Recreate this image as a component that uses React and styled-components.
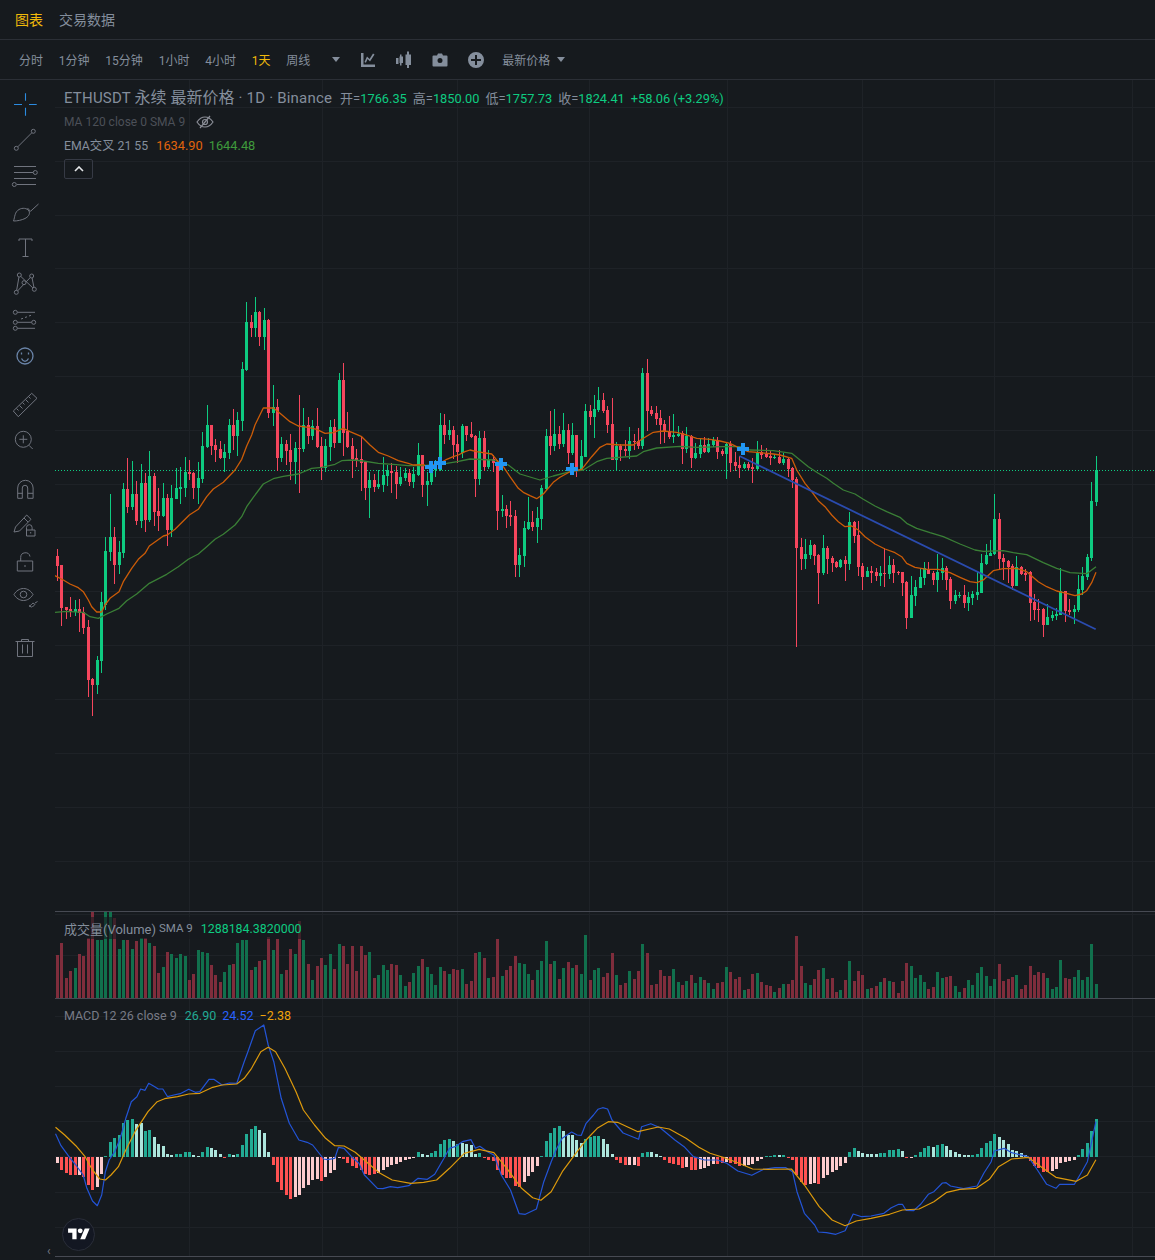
import React from "react";
import styled, { createGlobalStyle } from "styled-components";

const GlobalStyle = createGlobalStyle`
  html, body { margin: 0; padding: 0; background: #161a1e; }
  body { font-family: Roboto, "Noto Sans CJK SC", sans-serif; overflow: hidden; }
  #root { width: 1155px; height: 1260px; overflow: hidden; }
`;

/* ---------- data (read off the chart) ---------- */
const parseCandles = (s, ox, oy) =>
  s.trim().split(/\s*;\s*/).filter(Boolean).map((r) => {
    const p = r.trim().split(/\s+/);
    return { up: p[0] === "g", hi: oy + +p[1] / 3, top: oy + +p[2] / 3, bot: oy + +p[3] / 3, lo: oy + +p[4] / 3 };
  });

const candles = [
  ...parseCandles(`r 777 798 828 873;r 825 825 953 1007;r 950 951 961 987;r 921 957 965 981;g 930 957 965 978;r 927 957 969 1026;r 951 966 1014 1032;r 990 1011 1170 1220;r 1164 1167 1185 1277;g 1098 1110 1185 1212;
  g 906 936 1113 1149;g 741 783 945 960;g 612 741 786 813;r 711 741 825 882;g 753 786 825 852;g 579 597 789 804;r 504 597 651 669;g 513 612 651 660;r 573 612 693 705;g 522 579 693 714;
  r 549 579 690 726;g 483 558 690 696;r 549 558 666 708;r 594 663 678 723;g 579 624 678 681;r 612 624 720 768;g 585 624 720 741;g 534 594 627 627;g 531 591 597 642;g 501 546 594 621;
  r 510 546 552 570;r 546 549 594 627;g 516 564 594 642;g 426 468 567 579;g 345 405 471 474;r 405 405 468 495;r 447 465 480 516;r 453 477 504 507;g 462 486 504 546;g 387 405 489 507;
  r 357 405 438 480;g 366 390 438 498;g 216 237 393 423;g 36 96 240 243;r 75 96 114 141;g 21 66 114 141;r 63 66 141 168;g 54 90 141 180;r 87 90 369 384;g 285 351 369 408;
  r 327 351 504 543;g 441 462 504 516;r 450 462 483 525;r 432 480 516 570;g 456 474 516 582;r 315 474 477 609;g 354 405 477 486;r 381 405 438 462;g 390 408 438 450;r 354 408 471 474;
  r 441 468 534 570;g 447 468 534 546;g 390 411 471 513;r 387 411 459 474;g 249 270 459 459;r 219 270 429 498;r 366 423 471 474;r 444 468 507 564;r 477 504 510 531;r 438 507 519 603;
  r 513 516 594 630;g 546 570 594 684;r 552 570 591 606;g 540 582 591 597;g 501 555 585 606;g 525 541 558 588;r 519 543 549 609;r 528 546 582 627;g 531 561 582 588;g 534 549 564 573;
  r 537 549 576 588;g 531 552 576 594;g 459 495 555 558;r 494 495 585 621`, 50, 290),
  ...parseCandles(`g 365 393 405 468;g 335 355 396 405;g 330 345 360 380;g 189 225 360 362;r 192 225 255 282;g 210 240 255 270;r 228 240 285 327;r 255 282 306 339;g 222 228 309 324;r 228 228 255 273;
  r 216 252 261 264;r 255 258 387 441;g 243 264 387 405;r 243 264 351 363;g 300 327 351 357;r 315 327 339 366;r 330 336 483 540;g 435 477 483 501;r 465 477 498 534;r 453 495 501 528;
  r 480 498 645 681;g 594 615 645 681;g 513 534 618 651;g 441 516 537 540;r 483 516 531 543;g 471 504 531 579;g 405 414 507 540;g 237 258 417 420;r 183 258 288 315;g 177 252 288 303;
  r 228 252 282 297;g 189 240 282 291;r 222 240 309 342;g 219 255 309 315;r 255 255 360 381;g 270 318 360 360;g 162 183 321 321;r 165 183 201 225;g 135 177 201 264;g 111 150 180 186;
  r 129 150 183 189;r 168 180 225 249;r 144 222 330 330;g 276 288 330 362;r 282 288 300 333;r 270 297 303 318;g 231 273 303 327;r 252 273 276 300;r 234 273 288 297;g 54 69 288 297;
  r 27 69 183 243;r 168 180 192 198;r 168 189 207 225;r 180 204 225 282;r 210 222 243 279;r 198 243 261 267;g 192 255 261 279;g 228 252 258 261;r 243 249 297 342;g 231 258 297 309;
  r 255 258 324 354;g 279 309 324 327;g 267 285 312 324;r 261 285 306 309;g 264 282 306 309;g 261 270 285 291;r 261 270 306 327;r 297 303 312 318;g 279 282 312 387;r 273 282 339 366;
  r 306 336 348 363;r 318 345 354 384;g 336 342 354 357;r 336 342 354 360;r 324 351 357 399;g 273 309 357 360;r 285 306 315 327;r 294 312 321 324;r 300 318 324 345;g 315 321 324 327;
  r 300 321 339 342;g 309 327 339 345;r 324 327 357 381;r 351 354 390 414`, 420, 350),
  ...parseCandles(`r 112 117 323 623;r 294 321 357 390;g 297 342 357 387;g 300 315 345 357;r 312 315 348 375;r 342 345 399 492;g 285 324 399 405;r 318 324 357 402;r 348 354 369 396;r 363 366 381 384;
  g 357 360 381 384;r 348 360 372 423;g 216 246 372 390;r 243 246 288 309;r 243 285 381 408;r 369 378 411 450;g 381 393 411 411;r 378 393 399 429;r 384 396 408 423;g 378 399 408 438;
  r 325 399 402 441;g 348 375 402 417;r 357 375 399 429;r 393 396 399 405;r 396 396 429 468;r 423 426 534 567;g 408 465 534 534;g 420 441 468 498;g 384 411 444 444;g 366 384 414 435;
  r 366 387 402 402;r 393 399 420 435;g 342 396 420 456;g 354 384 399 420;r 378 384 420 450;r 411 417 483 507;g 450 465 483 492;g 456 465 468 474;r 435 465 489 504;g 456 471 489 513;
  g 453 462 474 495;g 396 456 465 480;g 342 369 459 459;g 312 345 372 375;g 300 339 348 345;g 162 237 342 345;r 219 237 357 390;r 342 354 366 420;r 360 363 381 429;r 372 378 438 450;
  g 348 381 438 438;r 378 381 402 405;r 387 399 405 423;r 393 396 489 543;r 462 486 510 540;r 477 507 510 546;r 504 507 555 591;g 492 531 555 555;g 513 525 534 543;g 504 522 528 540;
  g 385 453 525 525;r 453 453 513 546;r 477 510 516 525;g 495 507 516 552;g 405 447 510 516;g 381 408 450 465;g 342 351 411 420;g 126 183 354 363;g 48 90 186 198`, 780, 440),
];

const candleX = (i) => Math.floor(57.55 + 4.4005 * i);

const volumeTops = [
  150,114,219,198,189,147,153,100,20,105,105,20,20,40,132,105,105,132,108,100,100,115,123,204,186,141,147,159,147,153,
  225,207,135,141,144,180,210,231,201,180,177,114,105,105,195,186,168,165,96,135,102,207,195,132,147,48,105,177,225,183,
  159,180,147,192,117,123,177,123,198,123,150,141,219,210,180,195,177,180,210,243,231,204,183,162,186,207,240,186,198,207,
  192,195,192,237,228,144,141,159,219,216,102,213,195,183,153,174,178,207,225,195,168,108,177,168,222,189,171,189,180,
  207,90,225,195,189,216,204,144,210,240,234,198,222,198,117,144,240,237,195,213,213,192,231,240,228,210,234,216,225,234,
  252,234,231,186,201,222,216,255,252,207,204,231,240,243,261,249,237,237,225,93,183,234,240,222,195,189,222,219,261,255,
  225,168,228,198,210,252,249,243,231,219,228,231,264,228,174,183,219,210,231,252,246,201,219,216,213,243,261,249,225,240,
  204,186,213,243,222,177,228,222,216,210,252,240,183,210,201,204,219,252,246,165,219,222,216,195,225,216,117,237,
];

const macdRaw = `775p 795r 805r 810r 810r 810p 815r 840r 855r 846p 807p 752t 711t 699t 690t 654t 645t 642t 657l 654l 678t 675t 696l 717l 723l 747l 750l 747t 747t 741t 741t 750l 752l 741t 726t 729l 735l 747l 758r 747t 750l 747t 720t 687t 672t 663t 675l 684l 741l 780r 831r 855r 870r 882r 876p 870p 849p 840p 825p 822p 828r 816p 803p 795p 760p 762r 774r 783r 789r 795r 807r 810r 807r 804p 795p 786p 780p 777p 771p 765p 762p 760p 741t 747l 750l 744t 738t 717t 705t 702t 708l 717t 714l 717l 720l 747l 744t 758r 765r 767r 795r 810r 820r 820r 843r 845r 831p 813p 801p 783p 753t 708t 684t 669t 663t 678l 690l 690l 705l 714l 702t 697t 693t 693t 702l 717l 747l 765r 774r 780r 780p 780p 782r 744t 741t 741l 747l 752l 765r 774r 777r 780r 789r 786p 795r 795r 792p 789p 783p 777p 777r 774r 771p 774r 777r 783r 783p 780p 777p 768p 762p 752t 752t 750t 750l 750t 760r 765r 810r 831r 840r 837p 834p 837r 819p 810p 801p 795p 783p 774p 741t 729t 738l 744l 747l 747l 747l 744t 744t 735t 735t 732t 738l 758r 758p 750t 741t 729t 723t 726l 720t 717t 723l 735l 741l 747l 750l 750l 750t 747t 729t 714t 708t 687t 696l 705l 717l 735l 738l 744l 750l 768r 783r 789r 801r 801r 798p 792p 774p 771p 768p 765p 750t 732t 714t 678t 642t`;
const macdBars = macdRaw.split(" ").map((s) => ({ y: 905 + parseInt(s, 10) / 3, kind: s.slice(-1) }));
const histColors = { t: "#22ab94", l: "#ace5dc", r: "#ff5252", p: "#fccbcd" };

const pts = (arr, ox, oy, sx = 3) => {
  const out = [];
  for (let k = 0; k < arr.length; k += 2) out.push(`${(ox + arr[k] / sx).toFixed(1)},${(oy + arr[k + 1] / 3).toFixed(1)}`);
  return out;
};

const emaFast = [
  ...pts([15,857,40,870,60,882,85,893,100,905,115,930,125,950,140,966,155,966,165,945,180,925,207,905,220,875,245,835,265,808,285,790,298,768,320,752,340,738,352,735,375,718,418,675,445,658,470,620,490,597,520,577,555,540,575,508,590,468,605,435,615,405,640,354,670,354,690,370,720,395,745,408,775,412,800,418,825,430,850,428,880,415,900,425,935,440,960,465,985,487,1015,498,1045,512,1075,520,1090,525,1120,524], 50, 290),
  ...pts([22,350,60,340,80,328,100,320,115,315,135,305,150,300,170,305,215,312,230,330,250,350,270,380,295,415,310,427,330,437,350,446,370,432,400,397,420,382,450,365,485,358,515,320,540,292,560,282,600,285,640,285,670,265,700,247,730,243,770,247,800,255,830,265,870,268,900,273,930,280,960,295,985,305,1020,308,1060,312], 420, 350),
  ...pts([0,45,35,55,50,90,75,130,95,155,115,182,135,200,155,225,175,245,195,260,215,258,235,270,255,290,285,312,315,327,345,338,365,350,380,370,405,382,440,388,475,388,510,398,540,412,570,425,590,428,610,420,640,392,670,386,710,385,740,395,775,425,800,440,830,453,860,460,885,467,905,462,920,452,935,428,948,397], 780, 440),
].join(" ");

const emaSlow = [
  ...pts([15,967,50,964,100,967,120,980,145,985,170,972,207,955,230,932,260,912,298,880,350,853,385,830,415,808,445,792,470,770,495,748,520,733,555,705,575,680,590,650,610,622,640,582,670,566,700,559,745,552,785,535,815,532,855,523,875,512,910,510,940,513,985,520,1030,523,1075,527,1120,527], 50, 290),
  ...pts([80,340,112,335,150,327,220,330,265,345,300,372,360,390,400,378,450,365,490,360,530,335,560,325,650,318,670,305,710,294,780,289,830,292,910,290,960,290,990,300,1060,302], 420, 350),
  ...pts([0,35,35,40,60,60,85,80,115,100,140,115,160,130,190,150,225,162,250,178,285,198,320,215,360,232,380,250,410,265,450,278,490,290,540,312,585,330,610,334,670,332,700,338,740,344,790,368,830,385,870,398,920,401,948,380], 780, 440),
].join(" ");

const S6 = 2.703;
const macdLine = [
  ...pts([150,686,165,722,190,760,205,780,225,810,235,850,250,888,263,902,275,870,285,800,295,765,310,740,325,700,340,640,355,590,370,575,380,552,392,556,402,535,415,543,428,552,440,552,453,575,470,570,487,566,510,553,528,562,540,560,565,523,578,523,600,540,620,534,640,535,660,470,670,440,690,377,713,360,725,420,740,470,760,580,782,655,808,705,830,712,845,720,875,762,885,764,905,760,915,727,930,730,950,755,970,775,985,810,1020,850,1035,851,1055,845,1075,848,1105,842,1130,820,1155,823,1175,808,1200,760,1215,730,1230,725,1250,710,1273,704,1285,730,1297,724,1320,742,1335,750,1355,810,1380,855,1403,926,1420,928,1450,912,1470,830,1490,770,1505,730,1520,700,1545,681,1560,690], 0, 905, S6),
  ...pts([17,691,30,655,50,630,62,613,75,608,88,612,100,645,130,684,172,703,180,665,205,656,230,668,270,705,295,725,320,755,350,765,385,765,410,775,440,798,478,811,510,793,540,788,570,788,588,800,600,860,620,925,648,960,658,981,680,983,705,988,730,977,752,927,775,935,800,933,835,925,855,908,875,898,885,898,895,916,915,917,935,897,955,868,970,860,993,834,1003,833,1015,843,1050,851,1087,843,1105,805,1125,770,1133,738,1160,730,1180,743,1225,755,1250,795,1275,838,1300,850,1310,838,1350,838,1370,800,1385,770,1408,650], 575, 905, S6),
].join(" ");

const signalLine = [
  ...pts([150,667,175,690,205,722,230,755,250,795,270,822,285,825,300,810,320,785,340,735,365,680,400,620,425,590,445,581,480,575,510,567,540,565,575,547,600,540,640,537,660,520,680,490,705,440,725,427,745,440,770,490,800,560,820,615,850,660,880,700,905,722,930,723,960,742,990,770,1025,803,1060,825,1110,835,1145,832,1180,825,1215,790,1255,745,1295,733,1335,743,1370,790,1410,850,1440,878,1462,886,1490,860,1520,800,1560,740], 0, 905, S6),
  ...pts([30,705,60,670,90,650,115,652,170,680,225,666,255,672,300,700,335,727,365,745,400,757,440,773,480,792,520,793,585,792,620,840,660,905,695,945,730,962,760,948,800,940,850,928,885,915,930,912,970,890,1005,862,1040,853,1085,850,1120,823,1145,785,1180,762,1225,757,1265,790,1300,817,1355,829,1385,810,1408,764], 575, 905, S6),
].join(" ");

const gridX = [189, 322, 457, 589, 727, 862, 994, 1132];
const mainGridY = [107, 161, 215, 268, 322, 376, 430, 484, 537, 591, 645, 699, 753, 807, 861];
const macdGridY = [1016, 1051, 1086, 1121, 1156, 1192, 1227];
const markers = [[431, 466.7], [440, 463.3], [501, 463.7], [571.7, 469], [742.7, 448.7]];

/* ---------- layout ---------- */
const Page = styled.div`
  width: 1155px;
  height: 1260px;
  background: #161a1e;
  color: #848e9c;
  display: flex;
  flex-direction: column;
`;
const TopBar = styled.header`
  height: 40px;
  flex: none;
  box-sizing: border-box;
  display: flex;
  align-items: center;
  gap: 16px;
  padding: 0 15px 2px;
  border-bottom: 1px solid #2b2f36;
  font-size: 14px;
`;
const TopTab = styled.span`
  color: ${(p) => (p.$active ? "#f0b90b" : "#848e9c")};
`;
const ToolBar = styled.div`
  height: 40px;
  flex: none;
  box-sizing: border-box;
  display: flex;
  align-items: center;
  padding-left: 19px;
  border-bottom: 1px solid #2b2f36;
  font-size: 12px;
`;
const Intervals = styled.div`
  display: flex;
  gap: 15.8px;
`;
const Interval = styled.span`
  color: ${(p) => (p.$active ? "#f0b90b" : "#848e9c")};
`;
const IconGroup = styled.div`
  display: flex;
  margin-left: 12px;
`;
const ToolIcon = styled.span`
  width: ${(p) => p.$w}px;
  height: 20px;
  display: flex;
  align-items: center;
  justify-content: center;
  svg { display: block; fill: #848e9c; }
`;
const PriceSelect = styled.span`
  margin-left: 8px;
  display: flex;
  align-items: center;
  gap: 7px;
  color: #848e9c;
  svg { display: block; fill: #848e9c; }
`;
const Body = styled.div`
  position: relative;
  flex: 1;
  display: flex;
`;
const SideBar = styled.nav`
  width: 55px;
  flex: none;
  box-sizing: border-box;
  padding: 6px 5px 0 0;
  display: flex;
  flex-direction: column;
  align-items: center;
`;
const Tool = styled.span`
  width: 28px;
  height: 36px;
  flex: none;
  margin-top: ${(p) => p.$gap || 0}px;
  display: flex;
  align-items: center;
  justify-content: center;
  svg { display: block; fill: none; stroke: ${(p) => p.$color || "#70747e"}; stroke-width: ${(p) => p.$sw || 1}; }
`;
const Collapse = styled.span`
  position: absolute;
  left: 47px;
  bottom: 2px;
  font-size: 12px;
  line-height: 14px;
  color: #787b86;
`;
const Charts = styled.main`
  width: 1100px;
  flex: none;
  display: flex;
  flex-direction: column;
`;
const Pane = styled.section`
  position: relative;
  height: ${(p) => p.$h}px;
  flex: none;
  overflow: hidden;
  border-bottom: 1px solid #474a53;
`;
const PaneSvg = styled.svg`
  position: absolute;
  inset: 0;
  display: block;
`;
const Legend = styled.div`
  position: absolute;
  left: 9px;
  top: 6px;
  display: flex;
  flex-direction: column;
  align-items: flex-start;
  font-size: 12px;
`;
const LegendRow = styled.div`
  height: ${(p) => p.$h || 24}px;
  display: flex;
  align-items: ${(p) => (p.$baseline ? "baseline" : "center")};
  gap: ${(p) => p.$gap || 6}px;
  color: ${(p) => p.$color || "#848e9c"};
  white-space: nowrap;
`;
const Title = styled.span`
  font-size: 15px;
  letter-spacing: 0.2px;
  margin-right: 2px;
  line-height: 24px;
`;
const TitleCjk = styled.span`
  font-size: 16px;
  letter-spacing: 0;
`;
const Value = styled.span`
  color: ${(p) => p.$color || "#0ecb81"};
  font-size: 12.8px;
  margin-left: ${(p) => p.$ml || 0}px;
`;
const Pair = styled.span`
  font-size: 13px;
`;
const EmaName = styled.span`
  font-size: 12.3px;
`;
const EyeOff = styled.svg`
  display: block;
  margin-left: 5px;
  fill: none;
  stroke: #8a8d96;
  stroke-width: 1.2;
`;
const CollapseBtn = styled.button`
  width: 29px;
  height: 20px;
  margin-top: 3px;
  padding: 0;
  box-sizing: border-box;
  background: transparent;
  border: 1px solid #363a45;
  border-radius: 2px;
  display: flex;
  align-items: center;
  justify-content: center;
  svg { display: block; fill: none; stroke: #e6e8ea; stroke-width: 1.6; }
`;
const VolumeLegend = styled.div`
  position: absolute;
  left: 7px;
  top: 5px;
  height: 22px;
  padding: 0 2px;
  display: flex;
  align-items: center;
  gap: 3px;
  background: rgba(22, 26, 30, 0.62);
  font-size: 11.5px;
  color: #848e9c;
  white-space: nowrap;
`;
const VolumeName = styled.span`
  font-size: 13px;
`;
const VolumeValue = styled.span`
  margin-left: 5px;
  color: #0ecb81;
  font-size: 12.4px;
`;
const MacdLegend = styled.div`
  position: absolute;
  left: 9px;
  top: 8px;
  height: 16px;
  display: flex;
  align-items: center;
  gap: 6px;
  font-size: 12.5px;
  color: #787b86;
  white-space: nowrap;
`;
const MacdName = styled.span`
  margin-right: 2px;
`;
const MacdValue = styled.span`
  color: ${(p) => p.$color};
`;
const LogoBadge = styled.div`
  position: absolute;
  left: 7px;
  top: 219px;
  width: 33px;
  height: 33px;
  box-sizing: border-box;
  border-radius: 50%;
  background: #131722;
  border: 1px solid #2a2e39;
  display: flex;
  align-items: center;
  justify-content: center;
  svg { display: block; fill: #fff; }
`;

/* ---------- drawings ---------- */
const Grid = ({ ys }) => (
  <g stroke="#1e2227" strokeWidth="1" shapeRendering="crispEdges">
    {gridX.map((x) => <line key={x} x1={x + 0.5} x2={x + 0.5} y1="0" y2="1300" />)}
    {ys.map((y) => <line key={y} x1="55" x2="1155" y1={y + 0.5} y2={y + 0.5} />)}
  </g>
);

const MainChart = () => (
  <PaneSvg width="1100" height="831" viewBox="55 80 1100 831">
    <Grid ys={mainGridY} />
    <line x1="55" x2="1155" y1="470.5" y2="470.5" stroke="#0ecb81" strokeWidth="1" strokeDasharray="1 2" shapeRendering="crispEdges" />
    <g shapeRendering="crispEdges">
      {candles.map((c, i) => {
        const x = candleX(i);
        const color = c.up ? "#0ecb81" : "#f6465d";
        return (
          <g key={i} fill={color}>
            <rect x={x} y={Math.round(c.hi)} width="1" height={Math.max(1, Math.round(c.lo - c.hi))} />
            <rect x={x - 1} y={Math.round(c.top)} width="3" height={Math.max(1, Math.round(c.bot - c.top))} />
          </g>
        );
      })}
    </g>
    <polyline points={emaSlow} fill="none" stroke="#3a7f36" strokeWidth="1.3" strokeLinejoin="round" />
    <polyline points={emaFast} fill="none" stroke="#cc5c08" strokeWidth="1.3" strokeLinejoin="round" />
    <line x1="739.5" y1="456" x2="1095.7" y2="629.3" stroke="#2a4bae" strokeWidth="1.8" />
    <g fill="#2196f3" shapeRendering="crispEdges">
      {markers.map(([x, y]) => (
        <path key={x} d={`M${Math.round(x) - 2} ${Math.round(y) - 6}h4v4h4v4h-4v4h-4v-4h-4v-4h4z`} />
      ))}
    </g>
  </PaneSvg>
);

const VolumeChart = () => (
  <PaneSvg width="1100" height="86" viewBox="55 912 1100 86">
    <Grid ys={[914, 955]} />
    <g shapeRendering="crispEdges">
      {volumeTops.map((t, i) => {
        const y = Math.round(905 + t / 3);
        const up = candles[i] ? candles[i].up : true;
        return <rect key={i} x={candleX(i) - 1} y={y} width="3" height={998 - y} fill={up ? "#11704d" : "#7f2d3c"} />;
      })}
    </g>
  </PaneSvg>
);

const MacdChart = () => (
  <PaneSvg width="1100" height="257" viewBox="55 999 1100 257">
    <Grid ys={macdGridY} />
    <g shapeRendering="crispEdges">
      {macdBars.map((b, i) => {
        const y = Math.round(b.y);
        const y0 = Math.min(y, 1157);
        const h = Math.max(1, Math.abs(y - 1157));
        return <rect key={i} x={candleX(i) - 1} y={y0} width="3" height={h} fill={histColors[b.kind]} />;
      })}
    </g>
    <polyline points={macdLine} fill="none" stroke="#2354d6" strokeWidth="1.2" strokeLinejoin="round" />
    <polyline points={signalLine} fill="none" stroke="#dd9a0c" strokeWidth="1.2" strokeLinejoin="round" />
  </PaneSvg>
);

const icons = [
  { color: "#2b8be0", sw: 1.1, d: "M14.5 3.300v7.400M14.5 17.700v8M3 14.500h8M18 14.500h7.700" },
  { d: "M6.7 20.9L20.9 6.7", c: [[5.3, 22.3], [22.3, 5.3]] },
  { d: "M3 4.5h22M3 10.5h19M3 16.5h22M6 22.5h19", c: [[24.3, 10.5], [3.3, 22.5]] },
  { d: "M2.5 23C4 19 3.5 14 8 11.5c3.5-2 8-1.5 10 1.5 1.500 3-1 6-4 7.500-3.500 1.700-7.500 2.500-11.500 2.500zM16.500 10l3 3.300L27.500 6" },
  { d: "M8 7V5h13v2M14.500 5v17.500M11.500 22.500h6" },
  { d: "M8.300 5L5.300 22.300M8.300 5l15 14.300M20.700 6L5.300 22.300M20.700 6l2.600 13.300", c: [[8.3, 5], [20.7, 6], [13, 12.7], [5.3, 22.3], [23.3, 19.3]] },
  { d: "M6 6.300h18M6 16.300h15M6 22.300h18M10 13l2-.7M14 11.500l2-.7M18 10l2-.7", c: [[4.3, 6.3], [4.3, 16.3], [22.7, 16.3], [4.3, 22.3]] },
  { d: "M10.500 16.500c1 2 2.200 2.800 3.500 2.800s2.500-.8 3.500-2.800M10.500 10.500v2M17.500 10.500v2", ring: [14, 14, 8], color: "#6a84a8", sw: 1.3 },
  { gap: 12, d: "M20.700 3.300L26 8.300 7.300 26.700 2.300 21zM17.500 6.500l2 2M14.500 9.500l3 3M11.500 12.500l2 2M8.500 15.500l3 3M5.500 18.500l2 2" },
  { d: "M8.300 13.300h8M12.300 9.300v8M18 19.300l3.700 3.700", ring: [12.3, 13.3, 8] },
  { gap: 13, d: "M6.700 23.300V13a7.700 7.700 0 0 1 15.400 0v10.300h-5.400V13a2.700 2.700 0 0 0-5.400 0v10.300zM6.700 18.300h5M16.700 18.300h5.400" },
  { d: "M3 21l1.500-5L15.700 4l4.300 4.300L8.500 20zM13 7l4 4M15.500 19v-2.500a2.800 2.800 0 0 1 5.600 0V19M15.500 19h8.500v6h-8.500zM19.700 21v1.500" },
  { d: "M6.300 14h15.400v10H6.300zM9.700 14v-3.500a4.700 4.700 0 0 1 9.300-1M14 18v2" },
  { d: "M3 11.500C5 8 8.500 5.500 12.500 5.500s7.500 2.500 9.500 6c-2 3.500-5.500 6-9.500 6S5 15 3 11.500zM18 23c2-.2 2.500-2 4-3l2 1.500c-1 1.500-2.500 2-3.500 2.500zM24 20l2.500-1.500", ring: [12.5, 11.5, 3.3] },
  { gap: 14, d: "M6.500 8.500h15v15h-15zM4.500 8.500h19M10.500 8.500v-2h7v2M11.500 11.500v9M16.500 11.500v9" },
];

const Icon = ({ d, c, ring }) => (
  <svg width="28" height="28" viewBox="0 0 28 28">
    <path d={d} />
    {ring && <circle cx={ring[0]} cy={ring[1]} r={ring[2]} />}
    {c && c.map(([x, y]) => <circle key={`${x}-${y}`} cx={x} cy={y} r="2" fill="#161a1e" />)}
  </svg>
);

const Tri = () => (
  <svg width="8" height="5" viewBox="0 0 8 5"><path d="M0 0h8L4 5z" /></svg>
);

export default function App() {
  return (
    <Page>
      <GlobalStyle />
      <TopBar>
        <TopTab $active>图表</TopTab>
        <TopTab>交易数据</TopTab>
      </TopBar>
      <ToolBar>
        <Intervals>
          <Interval>分时</Interval>
          <Interval>1分钟</Interval>
          <Interval>15分钟</Interval>
          <Interval>1小时</Interval>
          <Interval>4小时</Interval>
          <Interval $active>1天</Interval>
          <Interval>周线</Interval>
        </Intervals>
        <IconGroup>
          <ToolIcon $w={28}><Tri /></ToolIcon>
          <ToolIcon $w={36}>
            <svg width="16" height="16" viewBox="0 0 16 16">
              <path d="M1 1h2.500v11.500H15V15H1z" />
              <path d="M4.500 10L7 4.500 9.600 7 13 1.500l1.500.9-4.500 7.100-2.400-2.400-1.700 3.600z" />
            </svg>
          </ToolIcon>
          <ToolIcon $w={36}>
            <svg width="18" height="18" viewBox="0 0 18 18">
              <path d="M1 7h2.500v6H1zM4.500 5.500H5V3.500h1.500v2H8V12H6.500v2.500H5V12h-.5zM10.500 3.500H12V.5h2v3h2V14h-2v3h-2v-3h-1.500z" />
            </svg>
          </ToolIcon>
          <ToolIcon $w={36}>
            <svg width="16" height="14" viewBox="0 0 16 14">
              <path fillRule="evenodd" d="M1.500 2.500H5L6 .5h4l1 2h3.500q1 0 1 1v9q0 1-1 1h-13q-1 0-1-1v-9q0-1 1-1zM8 5a2.500 2.500 0 1 0 0 5 2.500 2.500 0 0 0 0-5z" />
            </svg>
          </ToolIcon>
          <ToolIcon $w={36}>
            <svg width="16" height="16" viewBox="0 0 16 16">
              <path fillRule="evenodd" d="M8 0a8 8 0 1 1 0 16A8 8 0 0 1 8 0zM7 3v4H3v2h4v4h2V9h4V7H9V3z" />
            </svg>
          </ToolIcon>
        </IconGroup>
        <PriceSelect>最新价格<Tri /></PriceSelect>
      </ToolBar>
      <Body>
        <SideBar>
          {icons.map((ic, i) => (
            <Tool key={i} $gap={ic.gap} $color={ic.color} $sw={ic.sw}>
              <Icon d={ic.d} c={ic.c} ring={ic.ring} />
            </Tool>
          ))}
        </SideBar>
        <Collapse>‹</Collapse>
        <Charts>
          <Pane $h={831}>
            <MainChart />
            <Legend>
              <LegendRow $baseline>
                <Title>ETHUSDT <TitleCjk>永续 最新价格</TitleCjk> · 1D · Binance</Title>
                <Pair>开=<Value>1766.35</Value></Pair>
                <Pair>高=<Value>1850.00</Value></Pair>
                <Pair>低=<Value>1757.73</Value></Pair>
                <Pair>收=<Value>1824.41</Value></Pair>
                <Value>+58.06 (+3.29%)</Value>
              </LegendRow>
              <LegendRow $color="#4c5058">
                MA 120 close 0 SMA 9
                <EyeOff width="18" height="14" viewBox="0 0 18 14">
                  <path d="M1 7c2-3 5-5 8-5s6 2 8 5c-2 3-5 5-8 5S3 10 1 7zM4 13L14 1" />
                  <circle cx="9" cy="7" r="2.500" />
                </EyeOff>
              </LegendRow>
              <LegendRow $gap={6} $h={22}>
                <EmaName>EMA交叉 21 55</EmaName>
                <Value $color="#e0640c" $ml={2}>1634.90</Value>
                <Value $color="#3f9a3c">1644.48</Value>
              </LegendRow>
              <CollapseBtn>
                <svg width="10" height="6" viewBox="0 0 10 6"><path d="M1 5l4-4 4 4" /></svg>
              </CollapseBtn>
            </Legend>
          </Pane>
          <Pane $h={86}>
            <VolumeChart />
            <VolumeLegend>
              <VolumeName>成交量(Volume)</VolumeName>
              SMA 9
              <VolumeValue>1288184.3820000</VolumeValue>
            </VolumeLegend>
          </Pane>
          <Pane $h={257}>
            <MacdChart />
            <MacdLegend>
              <MacdName>MACD 12 26 close 9</MacdName>
              <MacdValue $color="#22ab94">26.90</MacdValue>
              <MacdValue $color="#2962ff">24.52</MacdValue>
              <MacdValue $color="#f0a30a">−2.38</MacdValue>
            </MacdLegend>
            <LogoBadge>
              <svg width="22" height="17" viewBox="0 0 36 28">
                <path d="M14 22H7V11H0V4h14v18zM28 22h-8l7.500-18h8L28 22z" />
                <circle cx="20" cy="8" r="4" />
              </svg>
            </LogoBadge>
          </Pane>
        </Charts>
      </Body>
    </Page>
  );
}
